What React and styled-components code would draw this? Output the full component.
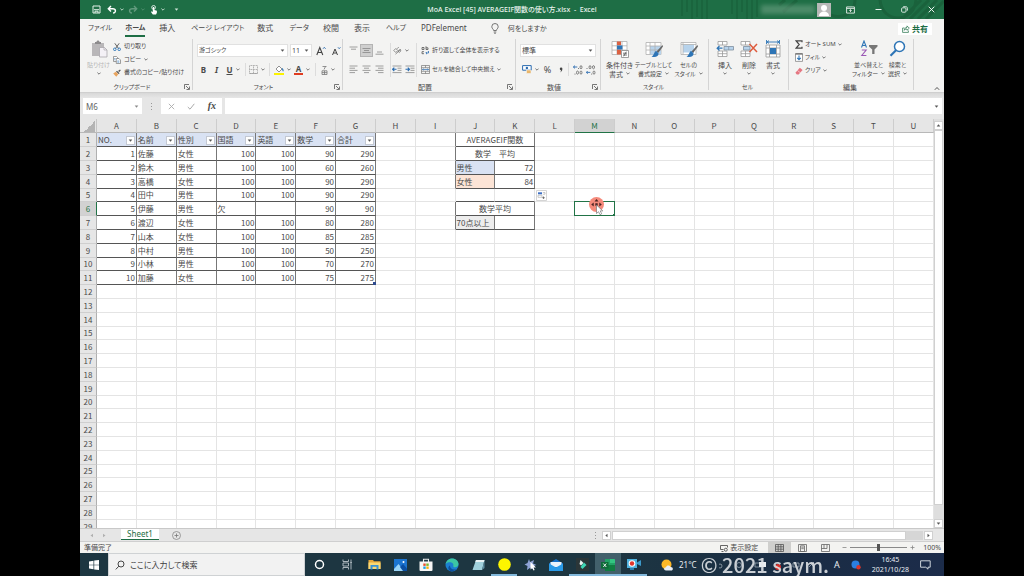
import React from "react";
import styled, { createGlobalStyle, css } from "styled-components";

const UI = `"Noto Sans", "Noto Sans CJK JP", sans-serif`;
const SHEET = `"Noto Sans CJK JP", "Noto Sans", sans-serif`;
const GREEN = "#1e6e45";

const GlobalStyle = createGlobalStyle`
  * { box-sizing: border-box; }
  body { margin: 0; background: #000; font-family: ${UI}; color: #4a4a4a; font-feature-settings: "palt"; }
  button, input, select { font: inherit; color: inherit; font-feature-settings: inherit; margin: 0; padding: 0; border: 0; background: none; border-radius: 0; }
  svg { display: block; flex: none; }
`;

const Stage = styled.div`
  padding: 0 80px;
  height: 100vh;
`;
const Window = styled.div`
  position: relative;
  display: flex;
  flex-direction: column;
  height: 100%;
  background: #e6e6e6;
`;

/* ---------- title bar ---------- */
const TitleBar = styled.header`
  position: relative;
  flex: none;
  display: grid;
  grid-template-columns: 1fr auto 1fr;
  align-items: center;
  height: 19px;
  background: ${GREEN};
  color: #e9f3ed;
`;
const Pattern = styled.svg`
  position: absolute;
  right: 0;
  top: 0;
`;
const QuickAccess = styled.div`
  display: flex;
  align-items: center;
  gap: 2px;
  padding-left: 9px;
`;
const Title = styled.h1`
  margin: 0;
  font-size: 7px;
  line-height: 19px;
  font-weight: 500;
  white-space: pre;
`;
const WindowTools = styled.div`
  position: relative;
  display: flex;
  justify-content: flex-end;
  align-items: center;
  padding-right: 4px;
`;
const Account = styled.div`
  width: 54px;
  height: 9px;
  margin-right: 2px;
  background: #6b9f82;
  opacity: 0.6;
  filter: blur(2px);
`;
const IconButton = styled.button`
  display: flex;
  align-items: center;
  justify-content: center;
  gap: 3px;
  flex: none;
  width: ${(p) => p.$w || 13}px;
  height: ${(p) => p.$h || 13}px;
  opacity: ${(p) => (p.$dim ? 0.3 : 1)};
  ${(p) => p.$on && css`background: #cfcfcf; border: 1px solid #b4b4b4;`}
`;

/* ---------- ribbon tabs ---------- */
const TabBar = styled.nav`
  flex: none;
  display: flex;
  align-items: center;
  height: 19px;
  padding: 0 12px 0 8px;
  background: #f3f3f2;
  font-size: 8px;
  line-height: 12px;
`;
const RibbonTab = styled.button`
  height: 16px;
  margin-right: ${(p) => p.$gap || 16}px;
  white-space: nowrap;
  font-size: ${(p) => (p.$kana ? 7 : 8)}px;
  border-bottom: 2px solid ${(p) => (p.$active ? GREEN : "transparent")};
  font-weight: ${(p) => (p.$active ? 700 : 400)};
`;
const TellMe = styled.button`
  display: flex;
  align-items: center;
  gap: 9px;
  margin-left: 8px;
  font-size: 7px;
`;
const Share = styled.button`
  display: flex;
  align-items: center;
  gap: 2px;
  height: 12px;
  margin-left: auto;
  padding: 0 4px;
  background: #fff;
  color: ${GREEN};
  font-weight: 700;
`;

/* ---------- ribbon ---------- */
const Ribbon = styled.section`
  flex: none;
  display: flex;
  height: 55px;
  background: #f3f3f2;
  border-bottom: 1px solid #cfcfcf;
  font-size: 7px;
  line-height: 9px;
`;
const Group = styled.div`
  display: flex;
  flex-direction: column;
  flex: none;
  width: ${(p) => p.$w}px;
  padding-left: ${(p) => p.$pad ?? 4}px;
  background: linear-gradient(#d4d4d4, #d4d4d4) right 1px / 1px 51px no-repeat;
`;
const GroupBody = styled.div`
  display: flex;
  flex: 1;
`;
const GroupLabel = styled.div`
  display: flex;
  align-items: center;
  height: 10px;
  padding-right: 3px;
  margin-left: -${(p) => p.$pad ?? 4}px;
  font-size: ${(p) => (p.$kana ? 6 : 7)}px;
  span { flex: 1; text-align: center; }
`;
const Stack = styled.div`
  display: flex;
  flex-direction: column;
  padding-top: ${(p) => p.$top}px;
`;
const StackButton = styled.button`
  display: flex;
  align-items: center;
  gap: ${(p) => p.$gap || 3}px;
  height: 13px;
  font-size: 6px;
  white-space: nowrap;
`;
const Rows = styled.div`
  display: flex;
  flex-direction: column;
  gap: 2px;
  padding: 4px 0 0 ${(p) => p.$left || 0}px;
`;
const Row = styled.div`
  display: flex;
  align-items: center;
  height: 17px;
  gap: ${(p) => p.$gap || 0}px;
`;
const Divider = styled.span`
  flex: none;
  width: 1px;
  height: ${(p) => p.$h || 13}px;
  margin: ${(p) => p.$m || "0 2px"};
  background: #dcdcdc;
`;
const BigButton = styled.button`
  display: flex;
  flex-direction: column;
  align-items: center;
  flex: none;
  width: ${(p) => p.$w}px;
  padding-top: 2px;
  font-size: ${(p) => (p.$kana ? 6 : 7)}px;
  white-space: nowrap;
  color: ${(p) => (p.$dim ? "#b5b5b5" : "inherit")};
  svg:first-child { margin-bottom: 3px; }
`;
const Line = styled.span`
  display: flex;
  align-items: center;
  justify-content: center;
  gap: 3px;
  height: 9px;
`;
const ChevronSlot = styled.span`
  display: flex;
`;
const Glyph = styled.b`
  font-size: ${(p) => p.$size || 8}px;
  line-height: 10px;
  font-style: ${(p) => (p.$italic ? "italic" : "normal")};
  text-decoration: ${(p) => (p.$under ? "underline" : "none")};
  font-weight: ${(p) => (p.$light ? 400 : 700)};
`;
const SelectBox = styled.label`
  display: grid;
  align-items: center;
  width: ${(p) => p.$w}px;
  height: 13px;
  background: #fff;
  border: 1px solid #e1e1e1;
  font-size: ${(p) => (p.$kana ? 6 : 7)}px;
  select { grid-area: 1 / 1; appearance: none; width: 100%; height: 11px; padding-left: 1px; outline: none; line-height: 11px; }
  svg { grid-area: 1 / 1; justify-self: end; margin-right: 2px; pointer-events: none; }
`;
const Collapse = styled.button`
  margin: auto 4px 1px auto;
`;

/* ---------- formula bar ---------- */
const FormulaBar = styled.div`
  flex: none;
  display: flex;
  align-items: center;
  height: 26px;
  padding: 0 2px 0 3px;
  background: linear-gradient(#d8d8d8, #e6e6e6 5px);
  font-size: 8px;
`;
const NameBox = styled.label`
  display: flex;
  align-items: center;
  width: 59px;
  height: 16px;
  padding: 0 3px;
  background: #fff;
  input { flex: 1; min-width: 0; outline: none; color: #666; font-size: 8px; }
`;
const Dots = styled.span`
  width: 1px;
  height: 7px;
  margin: 0 ${(p) => p.$m}px;
  margin-left: ${(p) => (p.$push ? "auto" : `${p.$m}px`)};
  background: repeating-linear-gradient(#999 0 1px, transparent 1px 3px);
`;
const FormulaTools = styled.div`
  display: flex;
  align-items: center;
  justify-content: space-around;
  width: 61px;
  height: 16px;
  margin-right: 3px;
  background: #fff;
`;
const Fx = styled.i`
  font-family: "Liberation Serif", serif;
  font-size: 10px;
  line-height: 12px;
  font-weight: 700;
`;
const FormulaInput = styled.label`
  display: flex;
  align-items: center;
  flex: 1;
  height: 16px;
  padding-right: 3px;
  background: #fff;
  input { flex: 1; outline: none; }
`;

/* ---------- worksheet ---------- */
const SheetArea = styled.main`
  flex: 1;
  min-height: 0;
  display: flex;
  overflow: hidden;
`;
const GridClip = styled.div`
  flex: 1;
  min-width: 0;
  overflow: hidden;
  background: #fff;
`;
const SheetTable = styled.table`
  width: 100%;
  table-layout: fixed;
  border-collapse: separate;
  border-spacing: 0;
  font-family: ${SHEET};
  font-feature-settings: normal;
  font-size: 8px;
  line-height: 12px;
  color: #4a4a4a;
`;
const Corner = styled.th`
  width: 17px;
  height: 14px;
  padding: 0;
  background: linear-gradient(135deg, transparent 50%, #b4b4b4 50%) 4px 2px / 11px 11px no-repeat #e6e6e6;
  border-right: 1px solid #c6c6c6;
  border-bottom: 1px solid #b8b8b8;
`;
const ColHead = styled.th`
  height: 14px;
  padding: 0;
  font-weight: 400;
  background: ${(p) => (p.$on ? "#d2d2d2" : "#e6e6e6")};
  color: ${(p) => (p.$on ? "#217346" : "#4a4a4a")};
  border-right: 1px solid #cdcdcd;
  border-bottom: 1px solid ${(p) => (p.$on ? "#217346" : "#b8b8b8")};
`;
const SheetRow = styled.tr`
  height: 14px;
  &:nth-child(5n) { height: 13px; }
`;
const RowHead = styled.th`
  padding: 0;
  font-weight: 400;
  background: ${(p) => (p.$on ? "#d2d2d2" : "#e6e6e6")};
  color: ${(p) => (p.$on ? "#217346" : "#4a4a4a")};
  border-right: 1px solid ${(p) => (p.$on ? "#217346" : "#b0b0b0")};
  border-bottom: 1px solid #cfcfcf;
`;
const Cell = styled.td`
  position: relative;
  padding: 0 1px;
  text-align: ${(p) => p.$align || "left"};
  white-space: pre;
  background: ${(p) => p.$fill || "#fff"};
  border-right: 1px solid ${(p) => (p.$r ? "#777" : "#e4e4e4")};
  border-bottom: 1px solid ${(p) => (p.$b ? "#555" : "#e4e4e4")};
`;
const HeadCell = styled.div`
  display: flex;
  align-items: center;
  justify-content: space-between;
  height: 12px;
`;
const FilterButton = styled.button`
  display: flex;
  align-items: center;
  justify-content: center;
  width: 9px;
  height: 9px;
  margin-top: 2px;
  background: #fff;
  border: 1px solid #c3c8d2;
`;
const Selection = styled.span`
  position: absolute;
  inset: -1px;
  border: 1px solid #217346;
  &::after { content: ""; position: absolute; right: -1px; bottom: -1px; width: 2px; height: 2px; background: #217346; }
`;
const Pointer = styled.svg`
  position: absolute;
  left: 13px;
  top: -6px;
  z-index: 2;
`;
const FillOptions = styled.button`
  position: absolute;
  left: 1px;
  top: 1px;
  z-index: 1;
  padding: 0;
`;
const TableCorner = styled.span`
  position: absolute;
  right: -1px;
  bottom: -1px;
  width: 3px;
  height: 3px;
  background: #2f4b8f;
`;
const VScroll = styled.div`
  flex: none;
  display: flex;
  flex-direction: column;
  width: 10px;
  padding: 2px 1px 0 0;
  background: #dedede;
`;
const VThumb = styled.div`
  flex: 1;
  margin-bottom: 14px;
  background: #fff;
  border: 1px solid #d0d0d0;
`;
const ScrollButton = styled.button`
  display: flex;
  align-items: center;
  justify-content: center;
  flex: none;
  width: 9px;
  height: 9px;
  background: #fff;
  border: 1px solid #d0d0d0;
`;

/* ---------- bottom bars ---------- */
const SheetTabs = styled.div`
  flex: none;
  display: flex;
  align-items: center;
  height: 13px;
  padding-left: 9px;
  background: #e6e6e6;
  border-top: 1px solid #c8c8c8;
`;
const SheetTab = styled.button`
  align-self: flex-start;
  width: 38px;
  height: 11px;
  margin: 0 13px 0 14px;
  background: #fff;
  border-bottom: 1px solid ${GREEN};
  color: ${GREEN};
  font-size: 8px;
  line-height: 10px;
`;
const HScroll = styled.div`
  display: flex;
  align-items: center;
  width: 40%;
  padding-right: 11px;
  gap: 1px;
`;
const HTrack = styled.div`
  flex: 1;
  padding-right: 17px;
  background: #d6d6d6;
`;
const HThumb = styled.div`
  height: 9px;
  background: #fff;
  border: 1px solid #d0d0d0;
`;
const StatusBar = styled.footer`
  flex: none;
  display: flex;
  align-items: center;
  height: 12px;
  padding: 0 3px 0 4px;
  background: #f3f3f1;
  border-top: 1px solid #cfcfcf;
  font-size: 7px;
  line-height: 10px;
`;
const ViewButton = styled.button`
  display: flex;
  align-items: center;
  justify-content: center;
  width: 23px;
  height: 11px;
  background: ${(p) => (p.$on ? "#cfcfcd" : "none")};
`;
const DisplaySettings = styled.button`
  display: flex;
  align-items: center;
  gap: 2px;
  margin: 0 10px 0 auto;
`;
const ZoomGroup = styled.label`
  display: flex;
  align-items: center;
  margin: 0 8px 0 5px;
`;
const Zoom = styled.input`
  appearance: none;
  width: 57px;
  height: 9px;
  margin: 0 3px;
  background: linear-gradient(#8a8a8a, #8a8a8a) center / 100% 1px no-repeat;
  &::-webkit-slider-thumb { appearance: none; width: 3px; height: 7px; background: #555; }
`;

/* ---------- taskbar ---------- */
const Taskbar = styled.div`
  flex: none;
  display: flex;
  align-items: center;
  height: 23px;
  background: linear-gradient(90deg, #1d3641 0%, #1d3641 60%, #1a2c45 85%, #1c2c4a 100%);
  color: #e8edf2;
`;
const StartButton = styled.button`
  display: flex;
  align-items: center;
  justify-content: center;
  width: 28px;
  height: 23px;
`;
const SearchBox = styled.label`
  display: flex;
  align-items: center;
  gap: 5px;
  width: 197px;
  height: 23px;
  padding-left: 6px;
  background: #f2f2f2;
  border: 1px solid #cfd2d4;
  input { flex: 1; min-width: 0; outline: none; font-size: 8px; color: #333; }
  input::placeholder { color: #3c3c3c; opacity: 1; }
`;
const TaskButton = styled.button`
  display: flex;
  align-items: center;
  justify-content: center;
  flex: none;
  width: ${(p) => p.$w || 26}px;
  height: 23px;
  border-bottom: 2px solid ${(p) => (p.$open ? "#83b9dc" : "transparent")};
  border-top: 2px solid transparent;
  background: ${(p) => (p.$on ? "#42606b" : "none")};
`;
const Weather = styled.div`
  display: flex;
  align-items: center;
  gap: 5px;
  margin-left: 14px;
  font-size: 8px;
`;
const Tray = styled.div`
  display: flex;
  align-items: center;
  gap: 11px;
  margin-left: auto;
  padding-right: 13px;
`;
const Clock = styled.time`
  text-align: center;
  font-size: 7px;
  line-height: 10px;
`;
const Watermark = styled.div`
  position: absolute;
  right: 115px;
  bottom: 0;
  font-family: ${SHEET};
  font-size: 20px;
  line-height: 22px;
  font-weight: 500;
  color: #e3e6e9;
  opacity: 0.88;
  white-space: pre;
`;

/* ---------- icons ---------- */
const Svg = ({ w, h, box, children, ...rest }) => (
  <svg width={w} height={h || w} viewBox={box || `0 0 ${w} ${h || w}`} fill="none" aria-hidden="true" {...rest}>
    {children}
  </svg>
);
const Chevron = ({ color = "#666" }) => (
  <ChevronSlot><Svg w={4} h={3}><path d="M.4.6 2 2.2 3.6.6" stroke={color} strokeWidth=".9" /></Svg></ChevronSlot>
);
const Triangle = ({ dir = "down", color = "#555" }) => (
  <Svg w={5} h={5}>
    <path
      fill={color}
      d={{ down: "M.7 1.5h3.6L2.5 3.7z", up: "M.7 3.5h3.6L2.5 1.3z", left: "M3.5.7v3.6L1.3 2.5z", right: "M1.5.7v3.6l2.2-1.8z" }[dir]}
    />
  </Svg>
);
const Launcher = () => (
  <Svg w={6}><path d="M.5 5V.5H5M2 2l3 3M5.5 2.5v3h-3" stroke="#555" strokeWidth=".8" /></Svg>
);
const Save = () => (
  <Svg w={9}><path d="M1 1h7v7H1z" stroke="#e3efe8" /><path d="M2 4.7h5M3 8V6.2h3V8" stroke="#e3efe8" /></Svg>
);
const Undo = ({ flip }) => (
  <Svg w={10} h={9}>
    <g transform={flip ? "matrix(-1 0 0 1 10 0)" : undefined}>
      <path d="M4 1 1.3 3.7 4 6.4M1.5 3.7h4.2c3.6 0 3.6 4.3.4 4.3" stroke="#fff" strokeWidth="1.4" />
    </g>
  </Svg>
);
const Touch = () => (
  <Svg w={8} h={10}>
    <circle cx="3.6" cy="2.4" r="1.9" stroke="#fff" strokeWidth=".8" />
    <path d="M2.8 2h1.5v3l2.6.7v2L6 9.6H2.8L1 7l.6-.7 1.2.7z" fill="#fff" />
  </Svg>
);
const Avatar = () => (
  <Svg w={14}>
    <path d="M0 0h14v14H0z" fill="#b9b9b9" />
    <circle cx="7" cy="5" r="3" fill="#fff" />
    <path d="M2 13c0-6 10-6 10 0z" fill="#fff" />
  </Svg>
);
const RibbonOptions = () => (
  <Svg w={9} h={8}><path d="M.6.9h7.8v6.2H.6zM.6 2.4h7.8M4.5 6V3.7M3.3 4.8l1.2-1.2 1.2 1.2" stroke="#fff" strokeWidth=".8" /></Svg>
);
const Minimize = () => <Svg w={7}><path d="M.5 3.5h6" stroke="#fff" strokeWidth=".9" /></Svg>;
const Restore = () => (
  <Svg w={7}><rect x=".6" y="1.8" width="4.4" height="4.4" rx="1" stroke="#fff" strokeWidth=".8" /><path d="M2.2.7h2.6c1 0 1.6.6 1.6 1.6v2.3" stroke="#fff" strokeWidth=".8" /></Svg>
);
const Close = () => <Svg w={7}><path d="m.7.7 5.6 5.6m0-5.6L.7 6.3" stroke="#fff" strokeWidth=".9" /></Svg>;
const Bulb = () => (
  <Svg w={8} h={11}>
    <path d="M2.6 7.5C2.6 6.2.8 5.6.8 3.7a3.2 3.2 0 0 1 6.4 0c0 1.9-1.8 2.5-1.8 3.8zM2.7 9h2.6M3.2 10.3h1.6" stroke="#555" strokeWidth=".8" />
  </Svg>
);
const ShareIcon = () => (
  <Svg w={8}><path d="M2.5 3H.6v4.4h5.8V5.5M2.3 5.3C2.4 3.4 3.6 2.4 5 2.4V.9l2.3 2.3L5 5.3V4c-1.2 0-2 .3-2.7 1.3z" stroke={GREEN} strokeWidth=".7" /></Svg>
);
const Paste = () => (
  <Svg w={18}>
    <path d="M2 3h12v13H2z" fill="#b9b7b9" />
    <path d="M5 4V2h1.5c0-2 3-2 3 0H11v2z" fill="#8d8b8d" />
    <path d="M9.5 7.5h5l2.5 2.5v7H9.5z" fill="#f4f1f6" stroke="#a9a7ac" strokeWidth=".8" />
    <path d="M14 7.5V10h3" stroke="#a9a7ac" strokeWidth=".7" />
  </Svg>
);
const Cut = () => (
  <Svg w={8}>
    <path d="m1.8.3 3.7 5.2M6.2.3 2.5 5.5" stroke="#555" strokeWidth=".9" />
    <circle cx="1.8" cy="6.3" r="1.3" stroke="#2b75b8" strokeWidth=".9" />
    <circle cx="6.2" cy="6.3" r="1.3" stroke="#2b75b8" strokeWidth=".9" />
  </Svg>
);
const Copy = () => (
  <Svg w={8}>
    <path d="M.5.5h3l1 1v4h-4z" fill="#fff" stroke="#777" strokeWidth=".7" />
    <path d="M3.3 2.5h2.7l1.5 1.5v3.5H3.3z" fill="#fff" stroke="#777" strokeWidth=".7" />
    <path d="M4.3 5h2M4.3 6.2h2M1.2 2.5h1.3M1.2 3.8h1.3" stroke="#2b75b8" strokeWidth=".6" />
  </Svg>
);
const Brush = () => (
  <Svg w={8}>
    <path d="M5 2 7 .4l.8.8L6.3 3.1z" fill="#555" />
    <path d="m4 1.7 2.6 2.5-1 .8L3 2.5z" fill="#555" />
    <path d="M2.8 2.7 5.3 5.2 3.3 7.7.2 4.500z" fill="#e8a35c" />
  </Svg>
);
const Borders = () => (
  <Svg w={9}><path d="M.5.5h8v8h-8zM4.5.5v8M.5 4.5h8" stroke="#999" strokeWidth=".8" strokeDasharray="1 .6" /><path d="M.5 8.5h8" stroke="#999" strokeWidth=".7" /></Svg>
);
const Fill = () => (
  <Svg w={10} h={10}>
    <path d="m2 4 3-3 3 3-3 3z" fill="#fff" stroke="#666" strokeWidth=".7" />
    <path d="M8 3.5c1 1 1.3 2 .8 2.700" stroke="#2b75b8" strokeWidth="1.1" />
    <path d="M0 8h10v2H0z" fill="#fbf200" />
  </Svg>
);
const FontColor = styled.span`
  display: block;
  width: 9px;
  border-bottom: 2px solid #e03c20;
  font-size: 8px;
  line-height: 8px;
  font-weight: 700;
  text-align: center;
`;
const Lines = ({ kind }) => {
  const d = {
    top: "M.5 1h8M2 3.2h5",
    middle: "M.5 2.5h8M2 4.5h5M.5 6.5h8",
    bottom: "M2 6h5M.5 8.2h8",
    left: "M.5 1h8M.5 3.2h5.5M.5 5.4h8M.5 7.6h5.5",
    center: "M.5 1h8M2 3.2h5M.5 5.4h8M2 7.6h5",
    right: "M.5 1h8M3 3.2h5.5M.5 5.4h8M3 7.6h5.5",
  }[kind];
  return <Svg w={9}><path d={d} stroke="#888" strokeWidth=".8" /></Svg>;
};
const Indent = ({ out }) => (
  <Svg w={10} h={9}>
    <path d="M.5 1h9M5.5 3.2h4M5.5 5.4h4M.5 7.6h9" stroke="#888" strokeWidth=".8" />
    <path d={out ? "M.5 4.3h4M2.3 2.6.6 4.3l1.7 1.7" : "M.5 4.3h4M2.8 2.6l1.7 1.7-1.7 1.7"} stroke="#2b6cb0" strokeWidth="1.1" />
  </Svg>
);
const Orient = () => (
  <Svg w={9}><path d="m.8 4.5 2-2 2 2-2 2zM4 2.8 5.8 1M5 5.2l1.6-1.7 1.3 1.3-1.5 1.7zM2.5 8.2 8 3.2" stroke="#777" strokeWidth=".8" /></Svg>
);
const Wrap = () => (
  <Svg w={9}>
    <path d="M1 1.5h2v2H1zM5 .3v3.2h2V1.8H5M1 5.7h2M1 5.7v2h2" stroke="#555" strokeWidth=".8" />
    <path d="M5 7h2.5V5M6 5.8 4.8 7 6 8.2" stroke="#2b6cb0" strokeWidth=".8" />
  </Svg>
);
const Merge = () => (
  <Svg w={9}>
    <path d="M.5.5h8v8h-8zM.5 2.7h8M.5 6.3h8M4.5.5v2.2M4.5 6.3v2.2" stroke="#777" strokeWidth=".7" />
    <path d="M1.5 4.5h6M2.5 3.7l-1 .8 1 .8M6.5 3.7l1 .8-1 .8" stroke="#2b6cb0" strokeWidth=".7" />
  </Svg>
);
const Currency = () => (
  <Svg w={10} h={9}>
    <path d="M.6.6h8.6v4.6H.6z" fill="#fff" stroke="#2b6cb0" strokeWidth="1" />
    <circle cx="4.9" cy="2.9" r="1.2" fill="#2b6cb0" />
    <path d="M4.5 5h4.5v3.5H4.5z" fill="#e9b66b" stroke="#f3f3f2" strokeWidth=".6" />
  </Svg>
);
const Decimals = ({ more }) => (
  <Svg w={10} h={10}>
    <circle cx={more ? 5.5 : 1} cy="3.5" r=".5" fill="#555" />
    <ellipse cx={more ? 8 : 4} cy="2.2" rx="1" ry="1.6" stroke="#555" strokeWidth=".7" />
    {!more && <ellipse cx="7.5" cy="2.2" rx="1" ry="1.6" stroke="#555" strokeWidth=".7" />}
    <path d={more ? "M.3 2h4M2 .6.4 2 2 3.4" : "M.3 7.4h4M1.700 6 .3 7.4l1.400 1.400"} stroke="#2b6cb0" strokeWidth=".9" />
    <circle cx={more ? 2 : 5.7} cy="8.9" r=".5" fill="#555" />
    {more && <ellipse cx="4.5" cy="7.6" rx="1" ry="1.6" stroke="#555" strokeWidth=".7" />}
    <ellipse cx="8" cy="7.6" rx="1" ry="1.6" stroke="#555" strokeWidth=".7" />
  </Svg>
);
const CondFormat = () => (
  <Svg w={18}>
    <path d="M1 1.5h15v13H1zM1 5.8h15M1 10.1h15M6 1.5v13M11 1.5v13" fill="#fff" stroke="#b0b0b0" strokeWidth=".8" />
    <path d="M6 1.5h4v3.8H6zM6 9.5h4v5H6z" fill="#dc6142" />
    <path d="M6 5.500h5.500v4H6z" fill="#2e75b6" />
    <path d="M10.5 10.500h7v7h-7z" fill="#fff" stroke="#888" strokeWidth=".8" />
    <path d="M12 13.2h4M12 15h4M15.3 11.7l-2.6 4.6" stroke="#444" strokeWidth=".7" />
  </Svg>
);
const FormatTable = ({ plain }) => (
  <Svg w={18}>
    <path d="M1 2.5h15v12H1z" fill="#fff" stroke="#b0b0b0" strokeWidth=".8" />
    <path d={plain ? "M3 4.5h11v8H3z" : "M5 6h11v8.5H5z"} fill="#b7d3ec" />
    <path d={plain ? "M1 4.5h15M3 2.5v12" : "M1 6h15M1 10h15M5 2.5v12M10 2.5v12"} stroke="#b0b0b0" strokeWidth=".8" />
    <path d="m17.500 5-6 6.500 1.600 1.500L18 6.500z" fill="#666" />
    <path d="M11.200 11c-2.300.5-1.700 4.300-4.700 5.500 3.500 1.300 7.300.2 7-3.200z" fill="#2e75b6" />
  </Svg>
);
const InsertCells = () => (
  <Svg w={18}>
    <path d="M2 1.5h9v3.5H2zM2 11h9v5.5H2zM6.5 1.5V5M6.5 11v5.5M2 13.7h9" fill="#fff" stroke="#999" strokeWidth=".8" />
    <path d="M8 6.5h9.5v3.5H8z" fill="#b7d3ec" stroke="#7f8f9f" strokeWidth=".8" />
    <path d="M12.7 6.5V10" stroke="#7f8f9f" strokeWidth=".7" />
    <path d="M1 8.2h5.5M3.5 5.9 1.2 8.2l2.3 2.3" stroke="#2e75b6" strokeWidth="1.3" />
  </Svg>
);
const DeleteCells = () => (
  <Svg w={18}>
    <path d="M1 1.5h9v3.5H1zM1 11h9v5.5H1zM5.5 1.5V5M5.5 11v5.5M1 13.7h9" fill="#fff" stroke="#999" strokeWidth=".8" />
    <path d="M3.5 6.5H10v3.5H3.5z" fill="#b7d3ec" stroke="#7f8f9f" strokeWidth=".8" />
    <path d="m9.5 4 7.5 8M17 4l-7.5 8" stroke="#dd5a3c" strokeWidth="1.500" />
  </Svg>
);
const FormatCells = () => (
  <Svg w={18}>
    <path d="M2 5h14v12H2zM2 8h14M2 14h14M5.500 5v12M12.500 5v12" fill="#fff" stroke="#999" strokeWidth=".8" />
    <path d="M6 8h6v6H6z" fill="#2e75b6" />
    <path d="M3 2h12M5 .6 3 2l2 1.4M13 .6 15 2l-2 1.4M2.500 0v4M15.500 0v4" stroke="#2e75b6" strokeWidth=".9" />
  </Svg>
);
const FillDown = () => (
  <Svg w={8} h={9}>
    <path d="M.5.6h7v7.8h-7z" fill="#fff" stroke="#888" strokeWidth=".8" />
    <path d="M.5 1h7" stroke="#555" />
    <path d="M4 2.5v4M2.2 4.8 4 6.6l1.8-1.8" stroke="#2e75b6" strokeWidth="1.1" />
  </Svg>
);
const Eraser = () => (
  <Svg w={8}><path d="M4.8.8 7.6 3 3.6 7.4H1.800L.4 5.800z" fill="#e57681" /><path d="m2.4 3.5 2.9 2.2" stroke="#fff" strokeWidth=".5" /></Svg>
);
const SortFilter = () => (
  <Svg w={18}>
    <path d="M1.5 7.5 4 1l2.5 6.5M2.3 5.5h3.4" stroke="#2e75b6" strokeWidth="1.1" />
    <path d="M1.8 10h4.4l-4.4 5.5h4.6" stroke="#9b59b6" strokeWidth="1.1" />
    <path d="M9 5h8.5v1.5L14.5 9.5V14h-2.3V9.5L9 6.5z" fill="#777" />
  </Svg>
);
const Find = () => (
  <Svg w={18}><circle cx="10.5" cy="6.500" r="5" stroke="#2e75b6" strokeWidth="1.500" fill="#fff" /><path d="M7 10.300 1.500 15.800" stroke="#2e75b6" strokeWidth="2.200" /></Svg>
);
const Magnifier = () => (
  <Svg w={10}><circle cx="6" cy="4" r="3" stroke="#333" strokeWidth=".9" /><path d="M3.8 6.2.8 9.4" stroke="#333" strokeWidth=".9" /></Svg>
);

/* ---------- data ---------- */
const COLS = "ABCDEFGHIJKLMNOPQRSTU".split("");
const HEADERS = ["NO.", "名前", "性別", "国語", "英語", "数学", "合計"];
const DATA = [
  [1, "佐藤", "女性", 100, 100, 90, 290],
  [2, "鈴木", "男性", 100, 100, 60, 260],
  [3, "高橋", "女性", 100, 100, 90, 290],
  [4, "田中", "男性", 100, 100, 90, 290],
  [5, "伊藤", "男性", "欠", "", 90, 90],
  [6, "渡辺", "女性", 100, 100, 80, 280],
  [7, "山本", "女性", 100, 100, 85, 285],
  [8, "中村", "男性", 100, 100, 50, 250],
  [9, "小林", "男性", 100, 100, 70, 270],
  [10, "加藤", "女性", 100, 100, 75, 275],
];
const SIDE = {
  J1: { text: "AVERAGEIF関数", span: 2, align: "center" },
  J2: { text: "数学　平均", span: 2, align: "center" },
  J3: { text: "男性", fill: "#d9e2f3" },
  K3: { text: 72, align: "right" },
  J4: { text: "女性", fill: "#fce4d6" },
  K4: { text: 84, align: "right" },
  J6: { text: "数学平均", span: 2, align: "center" },
  J7: { text: "70点以上", fill: "#ededed" },
  K7: { text: "" },
};

function renderCell(col, row) {
  const c = COLS.indexOf(col);
  const key = col + row;
  if (c < 7 && row === 1) {
    return (
      <Cell key={key} $fill="#d9e2f3" $r $b>
        <HeadCell>
          {HEADERS[c]}
          <FilterButton aria-label={`${HEADERS[c]} フィルター`}><Triangle /></FilterButton>
        </HeadCell>
      </Cell>
    );
  }
  if (c < 7 && row <= 11) {
    const v = DATA[row - 2][c];
    return (
      <Cell key={key} $r $b $align={typeof v === "number" ? "right" : "left"}>
        {v}
        {key === "G11" && <TableCorner />}
      </Cell>
    );
  }
  const side = SIDE[key];
  if (side) {
    return (
      <Cell key={key} colSpan={side.span} $r $b $align={side.align} $fill={side.fill}>
        {side.text}
      </Cell>
    );
  }
  if (col === "K" && SIDE["J" + row]?.span) return null;
  return (
    <Cell key={key} $r={col === "I" && row <= 7 && row !== 5} $b={(col === "J" || col === "K") && row === 5}>
      {key === "L5" && (
        <FillOptions aria-label="オートフィル オプション">
          <Svg w={11}>
            <path d="M.5.5h10v10H.5z" fill="#fff" stroke="#d5d5d5" />
            <path d="M2 2.3h4v2H2z" fill="#3d6fc4" />
            <path d="M2 5.3h4v2H2zM6.8 2.5h2.2v1.7H6.8" stroke="#aaa" strokeWidth=".6" />
            <path d="M7.5 6.500v2.500M6.200 7.700h2.600" stroke="#555" strokeWidth=".7" />
          </Svg>
        </FillOptions>
      )}
      {key === "M6" && (
        <>
          <Selection />
          <Pointer width="20" height="20" viewBox="0 0 20 20" fill="none">
            <circle cx="8.5" cy="8.5" r="7.5" fill="#f58a7b" />
            <path d="M8.5 3 10.500 5.500H6.500zM3.200 8.500 5.700 6.500v4zM13.800 8.500l-2.500-2v4zM7.300 7.300h2.400v2.400H7.300z" fill="#4a2222" />
            <path d="M8.5 9v8.5l2-1.8 1.5 3 1.7-.9-1.5-2.900h2.6z" fill="#fff" stroke="#777" strokeWidth=".7" />
          </Pointer>
        </>
      )}
    </Cell>
  );
}

const Sheet = () => (
  <SheetTable>
    <thead>
      <tr>
        <Corner />
        {COLS.map((c) => <ColHead key={c} scope="col" $on={c === "M"}>{c}</ColHead>)}
      </tr>
    </thead>
    <tbody>
      {Array.from({ length: 29 }, (_, i) => i + 1).map((r) => (
        <SheetRow key={r}>
          <RowHead scope="row" $on={r === 6}>{r}</RowHead>
          {COLS.map((c) => renderCell(c, r))}
        </SheetRow>
      ))}
    </tbody>
  </SheetTable>
);

const TABS = [
  { name: "ファイル", kana: true, gap: 13 },
  { name: "ホーム", kana: true, active: true, gap: 14 },
  { name: "挿入" },
  { name: "ページ レイアウト", kana: true, gap: 13 },
  { name: "数式" },
  { name: "データ", kana: true, gap: 14 },
  { name: "校閲", gap: 15 },
  { name: "表示" },
  { name: "ヘルプ", kana: true, gap: 15 },
  { name: "PDFelement" },
];

const TASKS = [
  { name: "Cortana", w: 28, icon: <Svg w={11}><circle cx="5.5" cy="5.5" r="4" stroke="#fff" strokeWidth="1.5" /></Svg> },
  { name: "タスク ビュー", w: 28, icon: <Svg w={11}><path d="M1 .5v2h5.5v-2M1 10.5v-2h5.5v2M1 4h5.5v3H1zM9 .5v10M8.3 3.5h1.6" stroke="#b9c4ca" strokeWidth=".9" /></Svg> },
  {
    name: "エクスプローラー",
    icon: (
      <Svg w={13} h={11}>
        <path d="M.5 1h4.5l1 1.2h6.5V10H.5z" fill="#e9a93a" />
        <path d="M.5 3.5h12V10H.5z" fill="#fbd873" />
        <path d="M2.5 10.500V6h8v4.500H8.500V7.8h-4v2.700z" fill="#3a93d4" />
      </Svg>
    ),
  },
  { name: "フォト", icon: <Svg w={13} h={12}><path d="M0 0h13v12H0z" fill="#1c74d0" /><path d="m0 10 4.500-5L10 12H0z" fill="#9ad4f7" /><path d="m6 8 3-3 4 4.500V12H9z" fill="#0b4fa3" /><circle cx="9.5" cy="3" r="1" fill="#fff" /></Svg> },
  {
    name: "ストア",
    icon: (
      <Svg w={14} h={13}>
        <path d="M4.5 4V1.2h5V4" stroke="#eee" strokeWidth="1.1" />
        <path d="M.5 3.5h13v8.5q0 1-1 1h-11q-1 0-1-1z" fill="#f6f6f6" />
        <path d="M4.3 5.5h2.4v2.4H4.3z" fill="#e8502e" /><path d="M7.3 5.5h2.4v2.4H7.3z" fill="#78b82a" />
        <path d="M4.3 8.5h2.4v2.4H4.3z" fill="#1fa3e8" /><path d="M7.3 8.5h2.4v2.4H7.3z" fill="#f7b50c" />
      </Svg>
    ),
  },
  {
    name: "Edge",
    icon: (
      <Svg w={14}>
        <circle cx="7" cy="7" r="6.5" fill="#1b7fd0" />
        <path d="M.7 6C1.5 2 4.5.5 7 .5c4 0 6.5 2.7 6.5 5.5 0 2-1.5 3.2-3.5 3.2-1.5 0-2-.7-1.7-1.5C9 5.5 6.5 3.8 4 4.2 2.3 4.5 1.2 5.3.7 6z" fill="#3cc6a4" />
        <path d="M5 7.5c-.3 2.5 2 4.5 6 3.8-1.5 1.7-3.500 2.200-5 2C3 12.500 2.500 8.500 5 7.500z" fill="#0d4f9e" />
      </Svg>
    ),
  },
  { name: "メモ帳", icon: <Svg w={13} h={12}><path d="M4 1h8.5L10 11H.5z" fill="#9fd0dc" /><path d="M4 1h8.5L12 3H3.3z" fill="#e8f2f4" /><path d="M10 11 12.5 1v8z" fill="#5d8da0" /></Svg> },
  { name: "録画", open: true, icon: <Svg w={13}><circle cx="6.5" cy="6.5" r="6.3" fill="#fdf500" /></Svg> },
  { name: "マウス", icon: <Svg w={13}><path d="m5 1 1 3 4-2-1 3.5L12.5 7 9 8l1 4-3.5-2.5L3 12l.5-4L.5 6.5 3.5 5z" fill="#8fa3d6" /><path d="M6.5 4v7.5l1.8-1.6 1.2 2.6 1.2-.5-1.2-2.6H12z" fill="#fff" /></Svg> },
  { name: "メール", icon: <Svg w={14} h={12}><path d="M0 4.5 7 0l7 4.5V12H0z" fill="#1671c9" /><path d="M1.5 3h11v5h-11z" fill="#eaf4fc" /><path d="m0 4.5 7 4 7-4V12H0z" fill="#2a9be8" /></Svg> },
  { name: "Filmora", open: true, icon: <Svg w={13}><path d="M0 0h13v13H0z" fill="#2b3638" /><path d="m4.5 2 3 3-2.5 2.5L3.500 6z" fill="#e9f3f1" /><path d="m8 4.5 2.500 2.500-4 4L4.500 9z" fill="#3fd6b4" /></Svg> },
  {
    name: "Excel",
    on: true,
    open: true,
    icon: (
      <Svg w={14} h={12}>
        <path d="M4 0h9q1 0 1 1v10q0 1-1 1H4z" fill="#21a366" /><path d="M9 0h4q1 0 1 1v3H9z" fill="#33c481" /><path d="M4 6h10v6H4z" fill="#107c41" />
        <path d="M0 3h7.5v6.5H0z" fill="#0f6b39" /><path d="m2.3 4.500 3 3.500m0-3.500-3 3.500" stroke="#fff" strokeWidth=".9" />
      </Svg>
    ),
  },
  { name: "レコーダー", open: true, icon: <Svg w={14} h={13}><path d="M0 1h10v9H0z" fill="#4fb3e0" /><path d="m10 4.500 4-2.500v6l-4-2z" fill="#3d9acb" /><circle cx="5" cy="5.500" r="3.300" fill="#fff" /><circle cx="5" cy="5.500" r="2.200" fill="#e0352b" /><path d="M3 10h4v2H3z" fill="#2c7fae" /></Svg> },
];

const Big = ({ w, icon, a, b, dim, kana }) => (
  <BigButton $w={w} $dim={dim} $kana={kana}>
    {icon}
    <Line>{a}</Line>
    <Line>{b}<Chevron /></Line>
  </BigButton>
);

export default function App() {
  return (
    <Stage>
      <GlobalStyle />
      <Window>
        <TitleBar>
          <Pattern width="264" height="19" viewBox="0 0 264 19" fill="none" aria-hidden="true">
            <path d="M2 0v16M7 0v12M12 0v19M17 0v17M22 0v19M27 0v19M52 0v14M57 0v19M62 0v12M67 0v19M72 0v19M77 0v17" stroke="#1a633d" strokeWidth="1.5" />
            <path d="M105 0l-6 5M117 0l-14 12M141 0c0 22 34 22 34 0M200 0c2 24 34 24 36 0M222 19l19-19M230 19l19-19M238 19l19-19M246 19l18-18" stroke="#1a623c" strokeWidth="3" />
          </Pattern>
          <QuickAccess>
            <IconButton $w={15} aria-label="保存"><Save /></IconButton>
            <IconButton $w={19} aria-label="元に戻す"><Undo /><Chevron color="#cfe3d7" /></IconButton>
            <IconButton $w={19} $dim aria-label="やり直し"><Undo flip /><Chevron color="#cfe3d7" /></IconButton>
            <IconButton $w={19} aria-label="タッチ モード"><Touch /><Chevron color="#cfe3d7" /></IconButton>
            <IconButton $w={14} aria-label="カスタマイズ"><Triangle color="#cfe3d7" /></IconButton>
          </QuickAccess>
          <Title>MoA Excel [45] AVERAGEIF関数の使い方.xlsx  -  Excel</Title>
          <WindowTools>
            <Account />
            <Avatar />
            <IconButton $w={38} aria-label="リボンの表示オプション"><RibbonOptions /></IconButton>
            <IconButton $w={18} aria-label="最小化"><Minimize /></IconButton>
            <IconButton $w={35} aria-label="元のサイズに戻す"><Restore /></IconButton>
            <IconButton $w={18} aria-label="閉じる"><Close /></IconButton>
          </WindowTools>
        </TitleBar>

        <TabBar>
          {TABS.map((t) => <RibbonTab key={t.name} $active={t.active} $gap={t.gap} $kana={t.kana}>{t.name}</RibbonTab>)}
          <TellMe><Bulb />何をしますか</TellMe>
          <Share><ShareIcon />共有</Share>
        </TabBar>

        <Ribbon>
          <Group $w={113}>
            <GroupBody>
              <Big w={29} dim kana icon={<Paste />} a="貼り付け" />
              <Stack $top={2}>
                <StackButton><Cut />切り取り</StackButton>
                <StackButton><Copy />コピー<Chevron /></StackButton>
                <StackButton><Brush />書式のコピー/貼り付け</StackButton>
              </Stack>
            </GroupBody>
            <GroupLabel $kana><span>クリップボード</span><Launcher /></GroupLabel>
          </Group>

          <Group $w={150}>
            <GroupBody>
              <Rows>
                <Row $gap={2}>
                  <SelectBox $w={91} $kana><select aria-label="フォント"><option>游ゴシック</option></select><Triangle /></SelectBox>
                  <SelectBox $w={22}><select aria-label="フォント サイズ"><option>11</option></select><Triangle /></SelectBox>
                  <IconButton aria-label="拡大"><Svg w={10}><path d="M.8 9 3.8 1.5 6.8 9M2 6.5h3.600" stroke="#444" strokeWidth="1.1" /><path d="M7 2.8 8.3 1.3l1.300 1.500" stroke="#2b6cb0" strokeWidth=".9" /></Svg></IconButton>
                  <IconButton aria-label="縮小"><Svg w={10}><path d="M1.5 9 4 3l2.5 6M2.5 7h3" stroke="#444" strokeWidth="1" /><path d="m7 1.3 1.200 1.400 1.200-1.400" stroke="#2b6cb0" strokeWidth=".9" /></Svg></IconButton>
                </Row>
                <Row>
                  <IconButton aria-label="太字"><Glyph>B</Glyph></IconButton>
                  <IconButton aria-label="斜体"><Glyph $italic>I</Glyph></IconButton>
                  <IconButton $w={20} aria-label="下線"><Glyph $under>U</Glyph><Chevron /></IconButton>
                  <Divider />
                  <IconButton $w={18} aria-label="罫線"><Borders /><Chevron /></IconButton>
                  <Divider $m="0 3px" />
                  <IconButton $w={18} aria-label="塗りつぶし"><Fill /><Chevron /></IconButton>
                  <IconButton $w={22} aria-label="フォントの色"><FontColor>A</FontColor><Chevron /></IconButton>
                  <Divider />
                  <IconButton $w={20} aria-label="ふりがな">
                    <Svg w={7} h={10}><path d="M1.5 1.5h4M4.5 1.5 3 4.5M1 5.8h5v3.700H1zM1 7.600h5M3.500 5.800v3.700" stroke="#777" strokeWidth=".8" /></Svg>
                    <Chevron />
                  </IconButton>
                </Row>
              </Rows>
            </GroupBody>
            <GroupLabel $kana><span>フォント</span><Launcher /></GroupLabel>
          </Group>

          <Group $w={173}>
            <GroupBody>
              <Rows>
                <Row>
                  <IconButton aria-label="上揃え"><Lines kind="top" /></IconButton>
                  <IconButton $on aria-label="上下中央揃え"><Lines kind="middle" /></IconButton>
                  <IconButton aria-label="下揃え"><Lines kind="bottom" /></IconButton>
                </Row>
                <Row>
                  <IconButton aria-label="左揃え"><Lines kind="left" /></IconButton>
                  <IconButton aria-label="中央揃え"><Lines kind="center" /></IconButton>
                  <IconButton aria-label="右揃え"><Lines kind="right" /></IconButton>
                </Row>
              </Rows>
              <Divider $h={34} $m="5px 0 0 4px" />
              <Rows>
                <Row><IconButton $w={20} aria-label="方向"><Orient /><Chevron /></IconButton></Row>
                <Row>
                  <IconButton $w={12} aria-label="インデントを減らす"><Indent out /></IconButton>
                  <IconButton aria-label="インデントを増やす"><Indent /></IconButton>
                </Row>
              </Rows>
              <Divider $h={34} $m="5px 0 0 0" />
              <Rows $left={4}>
                <Row><StackButton $gap={2}><Wrap />折り返して全体を表示する</StackButton></Row>
                <Row><StackButton $gap={2}><Merge />セルを結合して中央揃え<Chevron /></StackButton></Row>
              </Rows>
            </GroupBody>
            <GroupLabel><span>配置</span><Launcher /></GroupLabel>
          </Group>

          <Group $w={85}>
            <GroupBody>
              <Rows>
                <Row><SelectBox $w={76}><select aria-label="表示形式"><option>標準</option></select><Triangle /></SelectBox></Row>
                <Row>
                  <IconButton $w={20} aria-label="通貨"><Currency /><Chevron /></IconButton>
                  <IconButton $w={15} aria-label="パーセント"><Glyph $light $size={9}>%</Glyph></IconButton>
                  <IconButton $w={11} aria-label="桁区切り"><Svg w={4} h={6}><path d="M.8 1.8a1.3 1.3 0 1 1 2.6 0C3.4 3.5 2.5 4.8 1 5.5c.6-.7 1-1.4 1-2.300-.7 0-1.200-.6-1.200-1.400z" fill="#444" /></Svg></IconButton>
                  <Divider />
                  <IconButton aria-label="小数点以下を増やす"><Decimals more /></IconButton>
                  <IconButton aria-label="小数点以下を減らす"><Decimals /></IconButton>
                </Row>
              </Rows>
            </GroupBody>
            <GroupLabel><span>数値</span><Launcher /></GroupLabel>
          </Group>

          <Group $w={108} $pad={3}>
            <GroupBody>
              <Big w={31} icon={<CondFormat />} a="条件付き" b="書式" />
              <Big w={37} kana icon={<FormatTable />} a="テーブルとして" b="書式設定" />
              <Big w={33} kana icon={<FormatTable plain />} a="セルの" b="スタイル" />
            </GroupBody>
            <GroupLabel $pad={3} $kana><span>スタイル</span></GroupLabel>
          </Group>

          <Group $w={80}>
            <GroupBody>
              <Big w={24} icon={<InsertCells />} a="挿入" />
              <Big w={24} icon={<DeleteCells />} a="削除" />
              <Big w={24} icon={<FormatCells />} a="書式" />
            </GroupBody>
            <GroupLabel $kana><span>セル</span></GroupLabel>
          </Group>

          <Group $w={125} $pad={6}>
            <GroupBody>
              <Stack $top={0}>
                <StackButton $gap={2}>
                  <Svg w={8} h={9}><path d="M7 2.2V.9H1.2L4.2 4.500l-3 3.600H7V6.800" stroke="#444" strokeWidth="1.2" /></Svg>
                  オート SUM<Chevron />
                </StackButton>
                <StackButton $gap={2}><FillDown />フィル<Chevron /></StackButton>
                <StackButton $gap={2}><Eraser />クリア<Chevron /></StackButton>
              </Stack>
              <BigSpacer />
              <Big w={33} kana icon={<SortFilter />} a="並べ替えと" b="フィルター" />
              <Big w={25} kana icon={<Find />} a="検索と" b="選択" />
              <EndSpacer />
            </GroupBody>
            <GroupLabel $pad={6}><span>編集</span></GroupLabel>
          </Group>
          <Collapse aria-label="リボンを折りたたむ"><Svg w={6} h={5}><path d="m.8 3.8 2.2-2.3 2.2 2.3" stroke="#444" strokeWidth=".9" /></Svg></Collapse>
        </Ribbon>

        <FormulaBar>
          <NameBox><input aria-label="名前ボックス" defaultValue="M6" /><Triangle color="#888" /></NameBox>
          <Dots $m={9} />
          <FormulaTools>
            <IconButton aria-label="キャンセル"><Svg w={7}><path d="m.8.8 5.4 5.4m0-5.4L.8 6.200" stroke="#aaa" strokeWidth=".9" /></Svg></IconButton>
            <IconButton aria-label="入力"><Svg w={8} h={7}><path d="m.8 4 2.200 2.200L7.300.8" stroke="#aaa" strokeWidth="1" /></Svg></IconButton>
            <IconButton aria-label="関数の挿入"><Fx>fx</Fx></IconButton>
          </FormulaTools>
          <FormulaInput><input aria-label="数式バー" /><Triangle /></FormulaInput>
        </FormulaBar>

        <SheetArea>
          <GridClip><Sheet /></GridClip>
          <VScroll>
            <ScrollButton aria-label="上へ"><Triangle dir="up" /></ScrollButton>
            <VThumb />
            <ScrollButton aria-label="下へ"><Triangle /></ScrollButton>
          </VScroll>
        </SheetArea>

        <SheetTabs>
          <Svg w={18} h={5}><path d="M4 .8v3.400L1.500 2.500zM14 .8v3.400l2.500-1.700z" fill="#b0b0b0" /></Svg>
          <SheetTab>Sheet1</SheetTab>
          <IconButton $w={9} $h={9} aria-label="新しいシート"><Svg w={9}><circle cx="4.5" cy="4.5" r="4" stroke="#888" strokeWidth=".8" /><path d="M4.5 2.5v4M2.5 4.5h4" stroke="#777" strokeWidth=".8" /></Svg></IconButton>
          <Dots $m={6} $push />
          <HScroll>
            <ScrollButton aria-label="左へ"><Triangle dir="left" /></ScrollButton>
            <HTrack><HThumb /></HTrack>
            <ScrollButton aria-label="右へ"><Triangle dir="right" /></ScrollButton>
          </HScroll>
        </SheetTabs>

        <StatusBar>
          準備完了
          <DisplaySettings>
            <Svg w={8}><path d="M3.5 5.5h-3v-4h7v2M1.5 7.500h2" stroke="#555" strokeWidth=".9" /><circle cx="5.8" cy="5.7" r="1.500" stroke="#555" strokeWidth=".9" /></Svg>
            表示設定
          </DisplaySettings>
          <ViewButton $on aria-label="標準"><Svg w={9} h={8}><path d="M.5.5h8v7h-8zM.5 2.8h8M.5 5.2h8M3.200.5v7M5.900.5v7" stroke="#555" strokeWidth=".8" /></Svg></ViewButton>
          <ViewButton aria-label="ページ レイアウト"><Svg w={9} h={8}><path d="M.5.5h8v7h-8zM2.500 1.800h4v5.700h-4zM3.300 3.200h2.500M3.300 4.700h2.500" stroke="#666" strokeWidth=".8" /></Svg></ViewButton>
          <ViewButton aria-label="改ページ プレビュー"><Svg w={9} h={8}><path d="M.5.5h8v7h-8zM3 .5v4h3v-4M.5 4.500H3" stroke="#666" strokeWidth=".8" /></Svg></ViewButton>
          <ZoomGroup>
            <Svg w={5}><path d="M.5 2.500h4" stroke="#888" strokeWidth=".8" /></Svg>
            <Zoom type="range" aria-label="ズーム" defaultValue="50" />
            <Svg w={5}><path d="M.5 2.500h4M2.500.5v4" stroke="#888" strokeWidth=".8" /></Svg>
          </ZoomGroup>
          100%
        </StatusBar>

        <Taskbar>
          <StartButton aria-label="スタート"><Svg w={10}><path d="M0 1.4 4.5.7v4H0zM5.200.6 10 0v4.700H5.200zM0 5.300h4.500v4L0 8.600zM5.200 5.300H10V10l-4.800-.6z" fill="#fff" /></Svg></StartButton>
          <SearchBox><Magnifier /><input aria-label="検索" placeholder="ここに入力して検索" /></SearchBox>
          {TASKS.map((t) => <TaskButton key={t.name} aria-label={t.name} $w={t.w} $on={t.on} $open={t.open}>{t.icon}</TaskButton>)}
          <Weather>
            <Svg w={13} h={12}><circle cx="5.5" cy="5.5" r="5" fill="#fdb827" /><path d="M5 11.500c-2.500 0-2.500-3.200 0-3.200.5-2.300 3.800-2.300 4.300-.3 3-.5 3.500 3.500.7 3.500z" fill="#e8eef5" /></Svg>
            21°C
          </Weather>
          <Tray>
            <Svg w={104} h={12}>
              <circle cx="1" cy="7" r="2" stroke="#9aa7b3" strokeWidth=".8" />
              <circle cx="20" cy="6" r="2.500" stroke="#9aa7b3" strokeWidth=".8" />
              <path d="M36 4h6v4h-6z" stroke="#9aa7b3" strokeWidth=".8" />
              <path d="M40 3h7v5h-7z" fill="#e9edf0" />
              <circle cx="59" cy="8" r="3" fill="#d8322c" />
              <path d="M74 4h6v4h-6zM90 8l5-5M91 4l4 4" stroke="#9aa7b3" strokeWidth=".8" />
            </Svg>
            <Glyph $light $size={9}>A</Glyph>
            <Svg w={10}><circle cx="4.5" cy="4.5" r="4" fill="#2b7fe0" /><circle cx="7.5" cy="7.300" r="2.200" fill="#d8352c" /></Svg>
            <Clock>16:45<br />2021/10/28</Clock>
            <Svg w={11} h={10}><path d="M.6.8h9.600v6.400H8v2L5.800 7.200H.6z" stroke="#dfe5ea" strokeWidth=".9" /></Svg>
          </Tray>
        </Taskbar>
        <Watermark>© 2021 saym.</Watermark>
      </Window>
    </Stage>
  );
}

const BigSpacer = styled.span`
  flex: 1;
`;
const EndSpacer = styled.span`
  width: 4px;
`;
